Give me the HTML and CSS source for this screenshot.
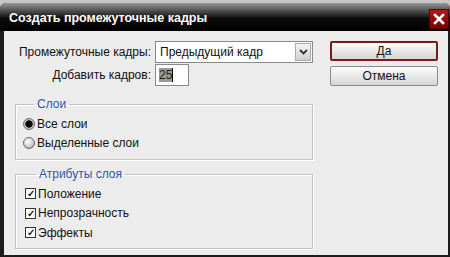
FILE: index.html
```html
<!DOCTYPE html>
<html>
<head>
    <title>Создать промежуточные кадры</title>
    <meta charset="utf-8">
    <link rel="stylesheet" href="styles.css">
</head>
<body>
    <div class="window">
        <div class="titlebar">
            <span class="title">Создать промежуточные кадры</span>
            <span class="close">
                <svg width="12" height="12" viewBox="0 0 12 12">
                    <path d="M2 2 L10 10 M10 2 L2 10" stroke="#fff" stroke-width="2.6" stroke-linecap="square"/>
                </svg>
            </span>
        </div>
        <div class="content">
            <div class="left">
                <div class="form">
                    <label class="lbl">Промежуточные кадры:</label>
                    <div class="select">
                        <span class="select-text">Предыдущий кадр</span>
                        <span class="arrow">
                            <svg width="9" height="6" viewBox="0 0 9 6">
                                <path d="M1 1 L4.5 4.5 L8 1" stroke="#333" stroke-width="1.8" fill="none"/>
                            </svg>
                        </span>
                    </div>
                    <label class="lbl">Добавить кадров:</label>
                    <div class="num"><span class="sel">25</span><span class="caret"></span></div>
                </div>

                <fieldset class="group">
                    <legend>Слои</legend>
                    <div class="opt"><span class="radio on"></span>Все слои</div>
                    <div class="opt"><span class="radio"></span>Выделенные слои</div>
                </fieldset>

                <fieldset class="group group-attrs">
                    <legend>Атрибуты слоя</legend>
                    <div class="opt"><span class="check">✓</span>Положение</div>
                    <div class="opt"><span class="check">✓</span>Непрозрачность</div>
                    <div class="opt"><span class="check">✓</span>Эффекты</div>
                </fieldset>
            </div>
            <div class="buttons">
                <button class="btn default">Да</button>
                <button class="btn">Отмена</button>
            </div>
        </div>
    </div>
</body>
</html>
```

FILE: styles.css
```css
body {
    margin: 0;
    background-color: #c6c6c6;
    font-family: "Liberation Sans", Arial, sans-serif;
    font-size: 12px;
    color: #111;
}

.window {
    margin-top: 3px;
    height: 254px;
    background-color: #1c1c1c;
    border-radius: 6px 6px 0 0;
    padding: 0 2px 2px 4px;
    box-sizing: border-box;
    display: flex;
    flex-direction: column;
}

.titlebar {
    height: 28px;
    display: flex;
    align-items: center;
    justify-content: space-between;
    padding: 0 1px 0 5px;
    margin-left: -4px;
    margin-right: -2px;
    border-radius: 6px 6px 0 0;
    background: linear-gradient(#9a9a9a 0%, #4a4a4a 30%, #0c0c0c 55%, #000 100%);
}

.title {
    color: #fff;
    font-family: "Liberation Sans", Arial, sans-serif;
    font-weight: bold;
    font-size: 12.5px;
    margin-left: 4px;
    margin-top: 1px;
}

.close {
    width: 20px;
    height: 20px;
    background: linear-gradient(#b01818, #7a0000);
    border: 1px solid #5a0000;
    box-sizing: border-box;
    display: flex;
    align-items: center;
    justify-content: center;
    margin-top: 4px;
}

.content {
    flex: 1;
    background-color: #ececec;
    display: flex;
    padding: 10px 0 0 11px;
}

.left {
    width: 298px;
}

.form {
    display: grid;
    grid-template-columns: 136px 158px;
    column-gap: 4px;
    row-gap: 1px;
    align-items: center;
}

.lbl {
    text-align: right;
    white-space: nowrap;
}

.select {
    height: 22px;
    background-color: #fff;
    border: 1px solid #8a8a8a;
    box-sizing: border-box;
    display: flex;
    align-items: center;
    justify-content: space-between;
    padding-left: 4px;
}

.arrow {
    width: 16px;
    height: 18px;
    margin-right: 1px;
    background: linear-gradient(#f4f4f4, #d0d0d0);
    border: 1px solid #a8a8a8;
    box-sizing: border-box;
    display: flex;
    align-items: center;
    justify-content: center;
}

.num {
    width: 34px;
    height: 22px;
    background-color: #fff;
    border: 1px solid #8a8a8a;
    box-sizing: border-box;
    display: flex;
    align-items: center;
    padding-left: 3px;
}

.sel {
    background-color: #9a9a9a;
    color: #222;
}

.caret {
    width: 1px;
    height: 14px;
    background-color: #000;
}

.group {
    margin: 11px 0 0 0;
    padding: 3px 0 6px 7px;
    border: 1px solid #c2c2c2;
    box-shadow: inset 1px 1px 0 #fff, 1px 1px 0 #fff;
}

.group-attrs {
    margin-top: 7px;
    padding-left: 9px;
    padding-bottom: 5px;
}

.group legend {
    color: #2d55a8;
    padding: 0 3px;
    margin-left: 11px;
}

.opt {
    height: 19.5px;
    display: flex;
    align-items: center;
}

.radio {
    width: 10px;
    height: 10px;
    border-radius: 50%;
    background: radial-gradient(circle at 40% 35%, #ffffff 0%, #cfcfcf 55%, #8a8a8a 100%);
    border: 1px solid #6a6a6a;
    margin-right: 2px;
}

.radio.on {
    background: radial-gradient(circle, #000 0%, #000 45%, #cfcfcf 60%, #8a8a8a 100%);
}

.check {
    width: 9px;
    height: 9px;
    border: 1px solid #333;
    background-color: #fff;
    font-size: 10px;
    line-height: 9px;
    text-align: center;
    font-weight: bold;
    color: #222;
    margin-right: 2px;
}

.buttons {
    margin-left: 17px;
    display: flex;
    flex-direction: column;
    gap: 5px;
}

.btn {
    width: 108px;
    height: 20px;
    font-family: "Liberation Sans", Arial, sans-serif;
    font-size: 12px;
    color: #111;
    background: linear-gradient(#fdfdfd, #e4e4e4 60%, #d6d6d6);
    border: 1px solid #8a8a8a;
    border-radius: 2px;
    padding: 0;
}

.btn.default {
    border: 2px solid #7a1a1a;
}
```
